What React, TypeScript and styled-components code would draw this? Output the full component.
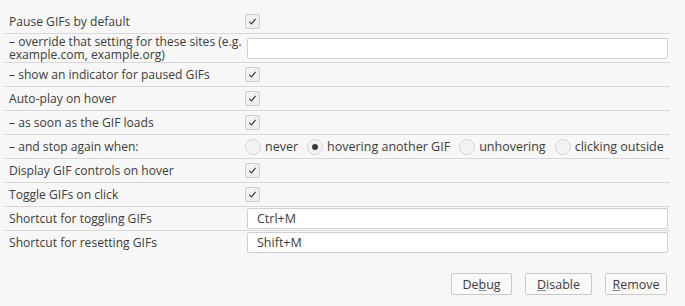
import styled, { createGlobalStyle } from "styled-components";

const GlobalStyle = createGlobalStyle`
  html, body {
    margin: 0;
    padding: 0;
    background: #f7f7f7;
  }
  body {
    font-family: "Open Sans", "Noto Sans", sans-serif;
    font-size: 12.1px;
    color: #3c3c3c;
  }
`;

const Page = styled.div`
  width: 685px;
  height: 306px;
  box-sizing: border-box;
  padding: 10px 15px 0 4px;
  display: flex;
  flex-direction: column;
`;

const Rows = styled.div`
  display: flex;
  flex-direction: column;
`;

const Row = styled.div<{ $last?: boolean; $tall?: boolean }>`
  display: grid;
  grid-template-columns: 241px 1fr;
  align-items: center;
  min-height: ${(p) => (p.$tall ? 28 : 23)}px;
  border-bottom: 1px solid ${(p) => (p.$last ? "transparent" : "#d9d9d9")};
`;

const Label = styled.div`
  padding-left: 5px;
  line-height: 13px;
`;

const Value = styled.div`
  display: flex;
  align-items: center;
`;

const Check = styled.span`
  width: 13px;
  height: 13px;
  border: 1px solid #cdcdcd;
  border-radius: 2px;
  background: #f0f0f0;
  display: flex;
  align-items: center;
  justify-content: center;

  & svg {
    width: 9px;
    height: 9px;
  }
`;

const TextInput = styled.input`
  box-sizing: border-box;
  width: 421px;
  height: 21px;
  margin-left: 2px;
  border: 1px solid #d0d0d0;
  border-radius: 2px;
  background: #fff;
  font: inherit;
  font-size: 12.5px;
  color: #3c3c3c;
  padding: 0 0 0 9px;
  outline: none;
`;

const Radios = styled.div`
  display: flex;
  align-items: center;
  gap: 9px;
  font-size: 12.5px;
`;

const RadioItem = styled.label`
  display: flex;
  align-items: center;
  gap: 4px;
`;

const RadioDot = styled.span<{ $on?: boolean }>`
  box-sizing: border-box;
  width: 16px;
  height: 16px;
  border-radius: 50%;
  border: 1px solid #d6d6d6;
  background: #f3f3f3;
  display: flex;
  align-items: center;
  justify-content: center;

  &::after {
    content: "";
    display: ${(p) => (p.$on ? "block" : "none")};
    width: 6px;
    height: 6px;
    border-radius: 50%;
    background: #3a3a3a;
  }
`;

const Footer = styled.div`
  margin-top: auto;
  margin-bottom: 11px;
  display: flex;
  justify-content: flex-end;
  gap: 13px;
  padding-right: 3px;
`;

const Button = styled.button<{ $w: number }>`
  width: ${(p) => p.$w}px;
  height: 22px;
  border: 1px solid #c9c9c9;
  border-radius: 2px;
  background: #f9f9f9;
  font: inherit;
  font-size: 12.5px;
  color: #3c3c3c;
  padding: 0;

  & u {
    text-decoration-color: #8a8a8a;
  }
`;

function Tick() {
  return (
    <Check>
      <svg viewBox="0 0 10 10">
        <path d="M1.5 5.2l2.4 2.4 4.6-5.4" fill="none" stroke="#3a3a3a" strokeWidth="1.3" />
      </svg>
    </Check>
  );
}

const stopOptions = [
  { label: "never", on: false },
  { label: "hovering another GIF", on: true },
  { label: "unhovering", on: false },
  { label: "clicking outside", on: false },
];

export default function App() {
  return (
    <>
      <GlobalStyle />
      <Page>
        <Rows>
          <Row>
            <Label>Pause GIFs by default</Label>
            <Value>
              <Tick />
            </Value>
          </Row>
          <Row $tall>
            <Label>– override that setting for these sites (e.g. example.com, example.org)</Label>
            <Value>
              <TextInput defaultValue="" />
            </Value>
          </Row>
          <Row>
            <Label>– show an indicator for paused GIFs</Label>
            <Value>
              <Tick />
            </Value>
          </Row>
          <Row>
            <Label>Auto-play on hover</Label>
            <Value>
              <Tick />
            </Value>
          </Row>
          <Row>
            <Label>– as soon as the GIF loads</Label>
            <Value>
              <Tick />
            </Value>
          </Row>
          <Row>
            <Label>– and stop again when:</Label>
            <Value>
              <Radios>
                {stopOptions.map((o) => (
                  <RadioItem key={o.label}>
                    <RadioDot $on={o.on} />
                    {o.label}
                  </RadioItem>
                ))}
              </Radios>
            </Value>
          </Row>
          <Row>
            <Label>Display GIF controls on hover</Label>
            <Value>
              <Tick />
            </Value>
          </Row>
          <Row>
            <Label>Toggle GIFs on click</Label>
            <Value>
              <Tick />
            </Value>
          </Row>
          <Row>
            <Label>Shortcut for toggling GIFs</Label>
            <Value>
              <TextInput defaultValue="Ctrl+M" />
            </Value>
          </Row>
          <Row $last>
            <Label>Shortcut for resetting GIFs</Label>
            <Value>
              <TextInput defaultValue="Shift+M" />
            </Value>
          </Row>
        </Rows>
        <Footer>
          <Button $w={61}>
            De<u>b</u>ug
          </Button>
          <Button $w={67}>
            <u>D</u>isable
          </Button>
          <Button $w={62}>
            <u>R</u>emove
          </Button>
        </Footer>
      </Page>
    </>
  );
}
